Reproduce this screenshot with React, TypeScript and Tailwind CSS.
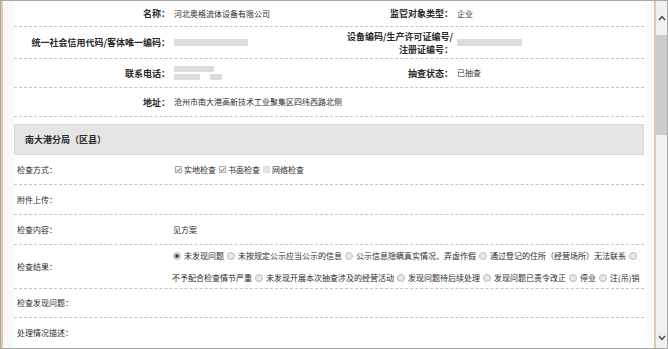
import React from "react";

const font = { fontFamily: '"Noto Sans CJK SC", "Noto Sans", sans-serif' };

const Blur = ({ w, h = 7 }: { w: number; h?: number }) => (
  <span
    className="inline-block bg-[#dcdcdc]"
    style={{ width: w, height: h }}
  />
);

const Check = ({ on }: { on: boolean }) => (
  <span
    className={
      "inline-flex items-center justify-center w-[7px] h-[7px] border mr-[2px] " +
      (on ? "border-[#aaa] bg-[#f4f4f4]" : "border-[#ddd] bg-[#e4e4e4]")
    }
  >
    {on && (
      <svg width="6" height="6" viewBox="0 0 6 6">
        <path d="M0.8 3 L2.4 4.6 L5.2 1.2" stroke="#555" strokeWidth="1.1" fill="none" />
      </svg>
    )}
  </span>
);

const Radio = ({ on }: { on?: boolean }) => (
  <span className="inline-flex items-center justify-center w-[8px] h-[8px] rounded-full border border-[#bbb] bg-[#e8e8e8] mr-[3px] ml-[3px]">
    {on && <span className="w-[4px] h-[4px] rounded-full bg-[#444]" />}
  </span>
);

const TopRow = ({
  h,
  l1,
  v1,
  l2,
  v2,
}: {
  h: string;
  l1: React.ReactNode;
  v1?: React.ReactNode;
  l2?: React.ReactNode;
  v2?: React.ReactNode;
}) => (
  <div className={"flex items-center border-b border-dashed border-[#c4c4c4] " + h}>
    <div className="w-[156px] text-right font-bold text-[9px] leading-[13px]">{l1}</div>
    <div className="w-[170px] pl-[4px] text-[8px] flex items-center">{v1}</div>
    <div className="w-[113px] text-right font-bold text-[9px] leading-[13px]">{l2}</div>
    <div className="flex-1 pl-[4px] text-[8px] flex items-center text-[#333]">{v2}</div>
  </div>
);

const Row = ({ h, label, children }: { h: string; label: string; children?: React.ReactNode }) => (
  <div className={"flex items-center border-b border-dashed border-[#c4c4c4] " + h}>
    <div className="w-[159px] pl-[3px] text-[8px]">{label}</div>
    <div className="flex-1 text-[8px]">{children}</div>
  </div>
);

export default function App() {
  return (
    <div
      className="w-[668px] h-[349px] border border-[#a9a9a9] bg-white text-[#2a2a2a] flex overflow-hidden"
      style={font}
    >
      <div className="w-[2px] bg-[#dccba4]" />
      <div className="w-[11px] bg-[#f9f9f9]" />
      <div className="w-[630px] flex flex-col">
        <TopRow h="h-[26px]" l1="名称：" v1="河北奥格流体设备有限公司" l2="监管对象类型：" v2="企业" />
        <TopRow
          h="h-[32px]"
          l1="统一社会信用代码/客体唯一编码："
          v1={<Blur w={74} />}
          l2={
            <>
              设备编码/生产许可证编号/
              <br />
              注册证编号：
            </>
          }
          v2={<Blur w={65} />}
        />
        <TopRow
          h="h-[29px]"
          l1="联系电话："
          v1={
            <span className="flex flex-col gap-[2px]">
              <Blur w={40} h={6} />
              <span className="flex gap-[10px]">
                <Blur w={26} h={6} />
                <Blur w={12} h={6} />
              </span>
            </span>
          }
          l2="抽查状态："
          v2="已抽查"
        />
        <TopRow h="h-[29px]" l1="地址：" v1={<span className="whitespace-nowrap">沧州市南大港高新技术工业聚集区四纬西路北侧</span>} />
        <div className="mt-[7px] h-[31px] bg-[#e5e5e5] border border-[#dadada] flex items-center pl-[10px] font-bold text-[9px]">
          南大港分局（区县）
        </div>
        <Row h="h-[30px]" label="检查方式：">
          <span className="flex items-center gap-[3px] pl-[2px]">
            <span className="flex items-center"><Check on />实地检查</span>
            <span className="flex items-center"><Check on />书面检查</span>
            <span className="flex items-center"><Check on={false} />网络检查</span>
          </span>
        </Row>
        <Row h="h-[30px]" label="附件上传：" />
        <Row h="h-[30px]" label="检查内容：">见方案</Row>
        <Row h="h-[44px]" label="检查结果：">
          <div className="flex flex-col gap-[10px] -ml-[3px] whitespace-nowrap">
            <div className="flex items-center">
              <Radio on />未发现问题<Radio />未按规定公示应当公示的信息<Radio />公示信息隐瞒真实情况、弄虚作假<Radio />通过登记的住所（经营场所）无法联系<Radio />
            </div>
            <div className="flex items-center pl-[2px]">
              不予配合检查情节严重<Radio />未发现开展本次抽查涉及的经营活动<Radio />发现问题待后续处理<Radio />发现问题已责令改正<Radio />停业<Radio />注(吊)销
            </div>
          </div>
        </Row>
        <Row h="h-[29px]" label="检查发现问题：" />
        <div className="flex items-center h-[29px] text-[8px] pl-[3px]">处理情况描述：</div>
      </div>
      <div className="w-[10px] bg-[#fbfbfb]" />
      <div className="w-[2px] bg-[#dccba4]" />
      <div className="flex-1 bg-[#f1f1f1] flex flex-col">
        <div className="h-[34px] flex items-center justify-center">
          <svg width="8" height="6" viewBox="0 0 8 6">
            <path d="M1 5 L4 1.5 L7 5" stroke="#444" strokeWidth="1.4" fill="none" />
          </svg>
        </div>
        <div className="h-[100px] bg-[#cdcdcd]" />
        <div className="flex-1" />
        <div className="h-[20px] flex items-center justify-center">
          <svg width="8" height="6" viewBox="0 0 8 6">
            <path d="M1 1 L4 4.5 L7 1" stroke="#444" strokeWidth="1.4" fill="none" />
          </svg>
        </div>
      </div>
    </div>
  );
}
